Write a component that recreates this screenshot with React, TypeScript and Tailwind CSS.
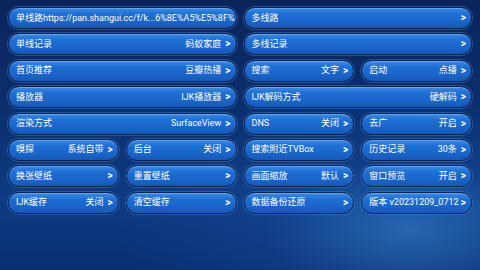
import React from "react";

type Item = { label: string; value?: string; arrow?: boolean; span?: number };

const rows: Item[][] = [
  [
    { label: "单线路https://pan.shangui.cc/f/k...6%8E%A5%E5%8F%", arrow: false, span: 2 },
    { label: "多线路", span: 2 },
  ],
  [
    { label: "单线记录", value: "蚂蚁家庭", span: 2 },
    { label: "多线记录", span: 2 },
  ],
  [
    { label: "首页推荐", value: "豆瓣热播", span: 2 },
    { label: "搜索", value: "文字" },
    { label: "启动", value: "点播" },
  ],
  [
    { label: "播放器", value: "IJK播放器", span: 2 },
    { label: "IJK解码方式", value: "硬解码", span: 2 },
  ],
  [
    { label: "渲染方式", value: "SurfaceView", span: 2 },
    { label: "DNS", value: "关闭" },
    { label: "去广", value: "开启" },
  ],
  [
    { label: "嗅探", value: "系统自带" },
    { label: "后台", value: "关闭" },
    { label: "搜索附近TVBox" },
    { label: "历史记录", value: "30条" },
  ],
  [
    { label: "换张壁纸" },
    { label: "重置壁纸" },
    { label: "画面缩放", value: "默认" },
    { label: "窗口预览", value: "开启" },
  ],
  [
    { label: "IJK缓存", value: "关闭" },
    { label: "清空缓存" },
    { label: "数据备份还原" },
    { label: "版本 v20231209_0712" },
  ],
];

function Btn({ item }: { item: Item }) {
  const arrow = item.arrow !== false;
  return (
    <div
      className={`${item.span === 2 ? "col-span-2" : "col-span-1"} h-[22px] rounded-full border-[1.5px] border-[#0a2452] bg-[linear-gradient(180deg,#3b8be4_0%,#1f6ed4_30%,#1a64c8_70%,#1758b6_100%)] shadow-[0_0_0_1px_rgba(70,130,210,0.45),inset_0_1px_0_rgba(140,190,250,0.5)] flex items-center pl-[7px] pr-[5px] text-white text-[9px] leading-none whitespace-nowrap overflow-hidden`}
    >
      <span className="flex-1 min-w-0">{item.label}</span>
      {item.value && <span className="ml-1">{item.value}</span>}
      {arrow && <span className="ml-[4px] font-bold text-[10px]">&gt;</span>}
    </div>
  );
}

export default function App() {
  return (
    <div
      className="w-[480px] h-[270px] overflow-hidden relative bg-[radial-gradient(ellipse_60%_50%_at_85%_85%,rgba(60,140,220,0.55)_0%,rgba(30,90,180,0.2)_50%,rgba(0,0,0,0)_100%),linear-gradient(180deg,#0a245a_0%,#0c2f6e_40%,#0d3b82_75%,#0b2f72_100%)]"
      style={{ fontFamily: 'Roboto, "Noto Sans CJK SC", sans-serif' }}
    >
      <div className="grid grid-cols-4 gap-x-[7px] gap-y-[4.4px] pt-[7px] px-[8px]">
        {rows.map((r, i) => (
          <React.Fragment key={i}>
            {r.map((it, j) => (
              <Btn key={j} item={it} />
            ))}
          </React.Fragment>
        ))}
      </div>
    </div>
  );
}
